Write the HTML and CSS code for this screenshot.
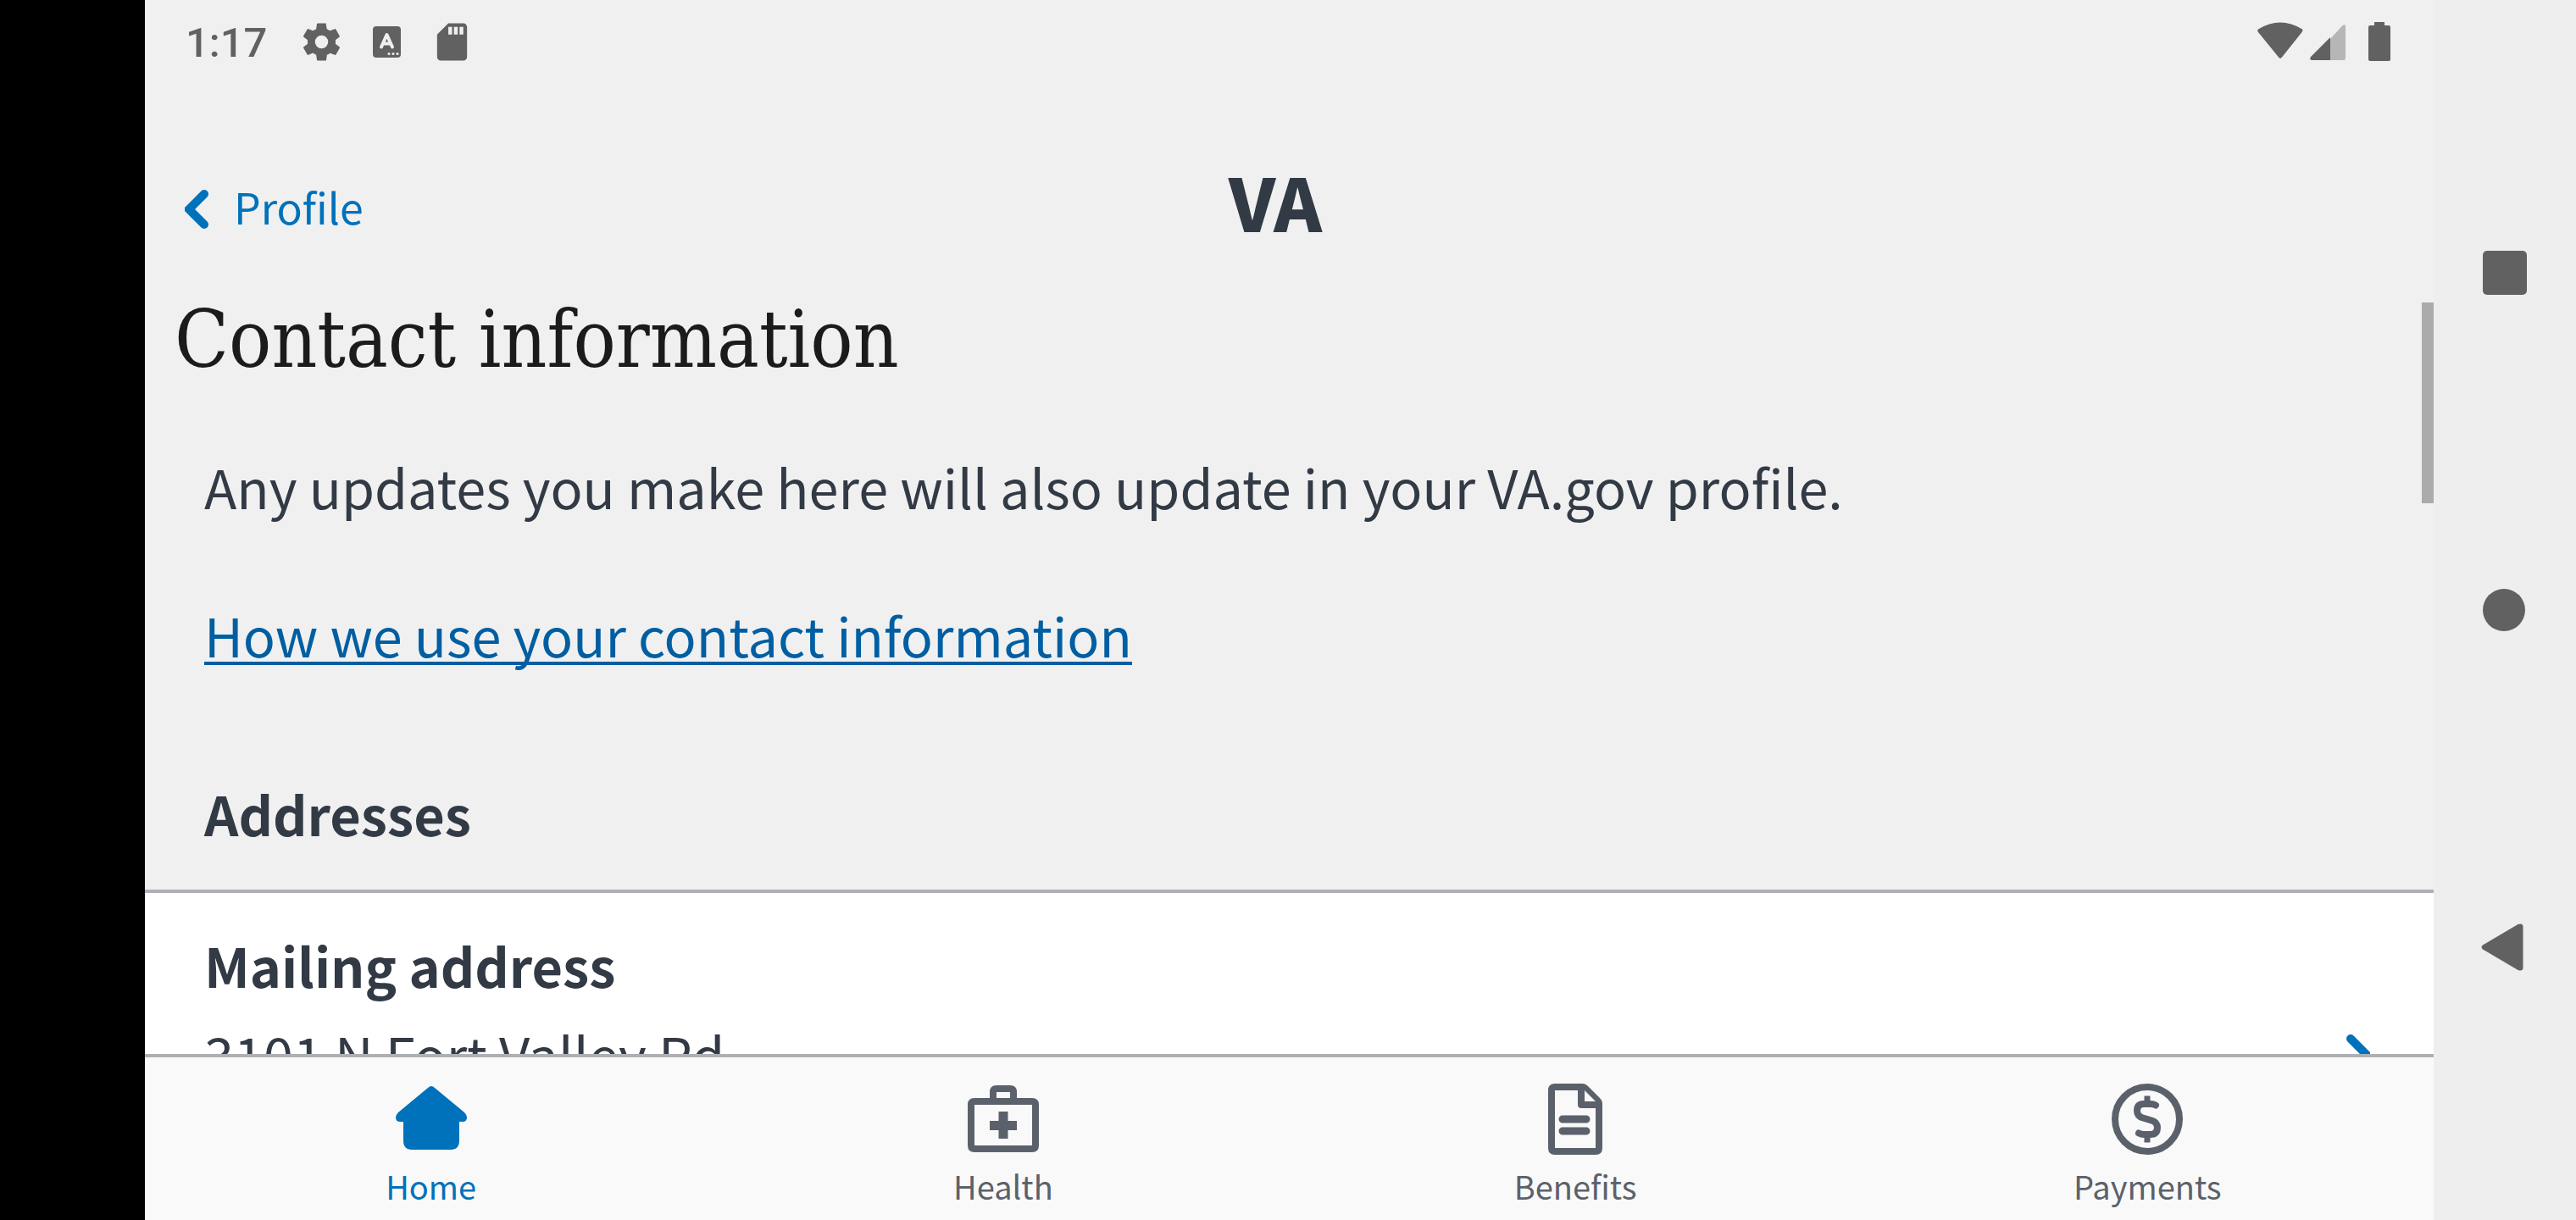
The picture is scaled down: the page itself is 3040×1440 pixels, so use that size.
FILE: index.html
```html
<!DOCTYPE html>
<html lang="en">
<head>
<meta charset="utf-8">
<meta name="viewport" content="width=device-width, initial-scale=1">
<title>Contact information</title>
<link rel="stylesheet" href="styles.css">
</head>
<body>
<div class="device">
  <div class="cutout"></div>
  <div class="app">
    <div class="status">
      <div class="status-group">
        <time class="clock">1:17</time>
        <svg class="status-icon" viewBox="0 0 24 24" aria-hidden="true"><path d="M19.4 13c0-.3.1-.6.1-1s0-.7-.1-1l2.100-1.650c.2-.15.250-.4.1-.650l-2-3.450c-.1-.2-.4-.3-.6-.2l-2.500 1c-.5-.4-1.100-.7-1.700-1l-.4-2.600C14.500 2.200 14.250 2 14 2h-4c-.25 0-.46.180-.5.420l-.38 2.650c-.6.250-1.170.590-1.690.980l-2.490-1c-.23-.09-.49 0-.61.220l-2 3.460c-.13.220-.07.490.120.640L4.570 11c-.04.330-.07.660-.07 1s.03.650.070.970l-2.110 1.660c-.19.150-.25.420-.12.640l2 3.460c.120.220.390.300.610.220l2.490-1.010c.520.400 1.080.730 1.690.980l.38 2.650c.030.240.240.430.490.430h4c.25 0 .46-.18.490-.42l.38-2.650c.610-.25 1.170-.59 1.690-.98l2.490 1.010c.220.080.490 0 .61-.22l2-3.460c.120-.22.070-.49-.12-.64zM12 15.500a3.500 3.500 0 1 1 0-7 3.500 3.500 0 0 1 0 7z"/></svg>
        <span class="badge-icon" aria-hidden="true">
          <svg viewBox="0 0 33 37" width="33" height="37"><rect width="33" height="37" rx="4"/><path d="M10 24.500 16.500 10 23 24.500M12.500 20.500h8" fill="none" stroke="#f0f0f0" stroke-width="4" stroke-linecap="round" stroke-linejoin="round"/><g fill="#f0f0f0"><circle cx="19" cy="32.500" r="1.500"/><circle cx="24" cy="32.500" r="1.500"/><circle cx="29" cy="32.500" r="1.500"/></g></svg>
        </span>
        <svg class="status-icon" viewBox="0 0 24 24" aria-hidden="true"><path d="M18 2h-8L4 8v12c0 1.100.9 2 2 2h12c1.100 0 2-.9 2-2V4c0-1.100-.9-2-2-2zm-6 6h-2V4h2v4zm3 0h-2V4h2v4zm3 0h-2V4h2v4z"/></svg>
      </div>
      <div class="status-group status-right">
        <svg viewBox="0 0 104 46" width="104" height="46" aria-hidden="true"><path d="M1 8.500Q27-7.500 53 8.500 54 10 52.500 12L29 41.500q-2 2.500-4 0L1 12Q-.5 10 1 8.500z"/><path d="M86 20 100.500 4q3.500-2 3.500 1v37q0 3-2 3H86z" fill="#b6b6b6"/><path d="M86 18v27H64q-3-1-1-4z"/></svg>
        <svg viewBox="0 0 26 46" width="26" height="46" aria-hidden="true"><path d="M7 0h12v4h5q2 0 2 2v38q0 2-2 2H2q-2 0-2-2V6q0-2 2-2h5z"/></svg>
      </div>
    </div>
    <header class="topbar">
      <a class="back" href="#profile">
        <svg class="chevron" viewBox="0 0 28 46" aria-hidden="true"><path d="M23 5 5 23l18 18"/></svg>
        <span class="back-label">Profile</span>
      </a>
      <span class="logo">VA</span>
    </header>
    <main class="content">
      <h1 class="title">Contact information</h1>
      <p class="intro">Any updates you make here will also update in your VA.gov profile.</p>
      <a class="help-link" href="#how">How we use your contact information</a>
      <h2 class="section-title">Addresses</h2>
      <button class="item" type="button">
        <span class="item-text">
          <strong>Mailing address</strong>
          <span>3101 N Fort Valley Rd</span>
        </span>
        <svg class="chevron" viewBox="0 0 28 46" aria-hidden="true"><path d="m5 5 18 18L5 41"/></svg>
      </button>
      <div class="scroll-thumb"></div>
    </main>
    <nav class="tabs" aria-label="Main">
      <a class="tab tab-active" href="#home" aria-current="page">
        <svg viewBox="0 0 84 84" aria-hidden="true"><path d="M38 5q4-4 8 0l35 29q3 3 3 6 0 5-5 5h-4v22q0 11-10 11H19Q9 78 9 67V45H5q-5 0-5-5 0-3 3-6z"/></svg>
        <span>Home</span>
      </a>
      <a class="tab" href="#health">
        <svg viewBox="0 0 84 84" aria-hidden="true"><path fill-rule="evenodd" d="M26 17V10q0-8 8-8h16q8 0 8 8v7h18q8 0 8 8v48q0 8-8 8H8q-8 0-8-8V25q0-8 8-8zm8 0h16V10H34zM8 25v48h68V25zM36.500 33h11v11H58v11H47.500v10h-11V55H26V44h10.500z"/></svg>
        <span>Health</span>
      </a>
      <a class="tab" href="#benefits">
        <svg viewBox="0 0 84 84" aria-hidden="true"><path fill-rule="evenodd" d="M18 0h33q3 0 6 3l14 14q3 3 3 6v53q0 8-8 8H18q-8 0-8-8V8q0-8 8-8zm0 8v68h48V29H49q-4 0-4-4V8zm35 0v13h13z"/><path d="M27 42h28M27 56h28" fill="none" stroke="currentColor" stroke-width="9" stroke-linecap="round"/></svg>
        <span>Benefits</span>
      </a>
      <a class="tab" href="#payments">
        <svg viewBox="0 0 84 84" aria-hidden="true"><g fill="none" stroke="currentColor" stroke-width="8"><circle cx="42" cy="42" r="38"/><path d="M42 18v6M42 60v6" stroke-linecap="square" stroke-width="7"/><path d="M52 25.500Q49 24 46 24H38Q30 24 30 32 30 38.500 37 40.500L47 43.500Q54 45.500 54 52 54 60 46 60H38Q35 60 32 58.500" stroke-linecap="round"/></g></svg>
        <span>Payments</span>
      </a>
    </nav>
  </div>
  <div class="rail">
    <button class="rail-button" type="button" aria-label="Recent apps"><svg viewBox="0 0 56 56"><rect x="2" y="2" width="52" height="52" rx="5"/></svg></button>
    <button class="rail-button" type="button" aria-label="Home"><svg viewBox="0 0 56 56"><circle cx="27" cy="28" r="25"/></svg></button>
    <button class="rail-button" type="button" aria-label="Back"><svg viewBox="0 0 56 56"><path d="M2 25.500 43.500 1q6-2 6 3v48q0 5-6 3L2 30.500q-3-2.500 0-5z"/></svg></button>
  </div>
</div>
</body>
</html>
```
FILE: styles.css
```css
* { box-sizing: border-box; }

body {
  margin: 0;
  background: #000;
  color: #323a45;
  font-family: "Noto Sans CJK SC", "Noto Sans", sans-serif;
  font-size: 63px;
  line-height: 105px;
}

a { text-decoration: none; }
svg { display: block; fill: currentColor; flex: none; }

.device { display: flex; height: 100vh; }
.cutout { flex: none; width: 171px; background: #000; }

.app {
  flex: 1;
  min-width: 0;
  display: flex;
  flex-direction: column;
  background: #f0f0f0;
}

/* System status bar */
.status {
  flex: none;
  display: flex;
  justify-content: space-between;
  align-items: center;
  height: 98px;
  padding: 0 51px 0 48px;
  color: #616161;
}
.status-group { display: flex; align-items: center; gap: 24px; }
.status-right { gap: 27px; }
.clock {
  margin-right: 14px;
  padding-top: 4px;
  font-family: Roboto, sans-serif;
  font-size: 49px;
  font-weight: 500;
  line-height: 56px;
}
.status-icon { width: 53px; height: 53px; }
.badge-icon { display: flex; justify-content: center; width: 53px; }

/* App header */
.topbar {
  flex: none;
  display: grid;
  grid-template-columns: 1fr auto 1fr;
  align-items: center;
  height: 259px;
  padding: 39px 80px 0 47px;
}
.back {
  display: flex;
  align-items: center;
  gap: 30px;
  color: #0071bb;
  font-size: 50px;
  line-height: 72px;
}
.back-label { padding-bottom: 8px; }
.chevron { width: 28px; height: 46px; fill: none; stroke: #0071bb; stroke-width: 10px; stroke-linecap: round; }
.logo { padding-bottom: 20px; font-size: 86px; font-weight: 900; line-height: 96px; }

/* Scrolling area */
.content {
  flex: 1;
  min-height: 0;
  position: relative;
  display: flex;
  flex-direction: column;
  overflow: hidden;
}
.title {
  flex: none;
  margin: 0 0 76px;
  padding: 0 35px;
  color: #1b1b1b;
  font-family: "DejaVu Serif Condensed", "DejaVu Serif", serif;
  font-size: 93px;
  font-weight: 400;
  line-height: 88px;
}
.intro { flex: none; margin: 0; padding: 0 70px; }
.help-link {
  flex: none;
  align-self: flex-start;
  margin: 70px 70px 0;
  color: #005ea2;
  text-decoration: underline;
  text-decoration-thickness: 4px;
  text-underline-offset: 5px;
  text-decoration-skip-ink: none;
}
.section-title {
  flex: none;
  margin: 106px 0 38px;
  padding: 0 70px;
  font-size: 63px;
  font-weight: 700;
}
.item {
  flex: none;
  display: flex;
  justify-content: space-between;
  align-items: center;
  min-height: 383px;
  margin: 0;
  padding: 32px 75px 32px 70px;
  border: 0;
  border-top: 4px solid #aeb0b5;
  background: #fff;
  color: inherit;
  font: inherit;
  text-align: left;
}
.item-text { align-self: flex-start; display: flex; flex-direction: column; }
.scroll-thumb {
  position: absolute;
  top: 0;
  right: 0;
  width: 14px;
  height: 237px;
  background: #ababab;
}

/* Bottom tabs */
.tabs {
  flex: none;
  display: grid;
  grid-template-columns: repeat(4, 1fr);
  border-top: 4px solid #aeb0b5;
  background: #f9f9f9;
}
.tab {
  display: flex;
  flex-direction: column;
  align-items: center;
  gap: 9px;
  padding: 31px 0 12px;
  color: #5b616b;
  font-size: 38px;
  line-height: 56px;
}
.tab svg { width: 84px; height: 84px; }
.tab-active { color: #0071bb; }

/* System navigation */
.rail {
  flex: none;
  display: flex;
  flex-direction: column;
  justify-content: space-between;
  align-items: center;
  width: 168px;
  padding: 20vh 0;
  background: #eee;
  color: #616161;
}
.rail-button {
  display: grid;
  place-items: center;
  width: 68px;
  height: 68px;
  padding: 0;
  border: 0;
  background: none;
  color: inherit;
}
.rail-button svg { width: 56px; height: 56px; }
```
